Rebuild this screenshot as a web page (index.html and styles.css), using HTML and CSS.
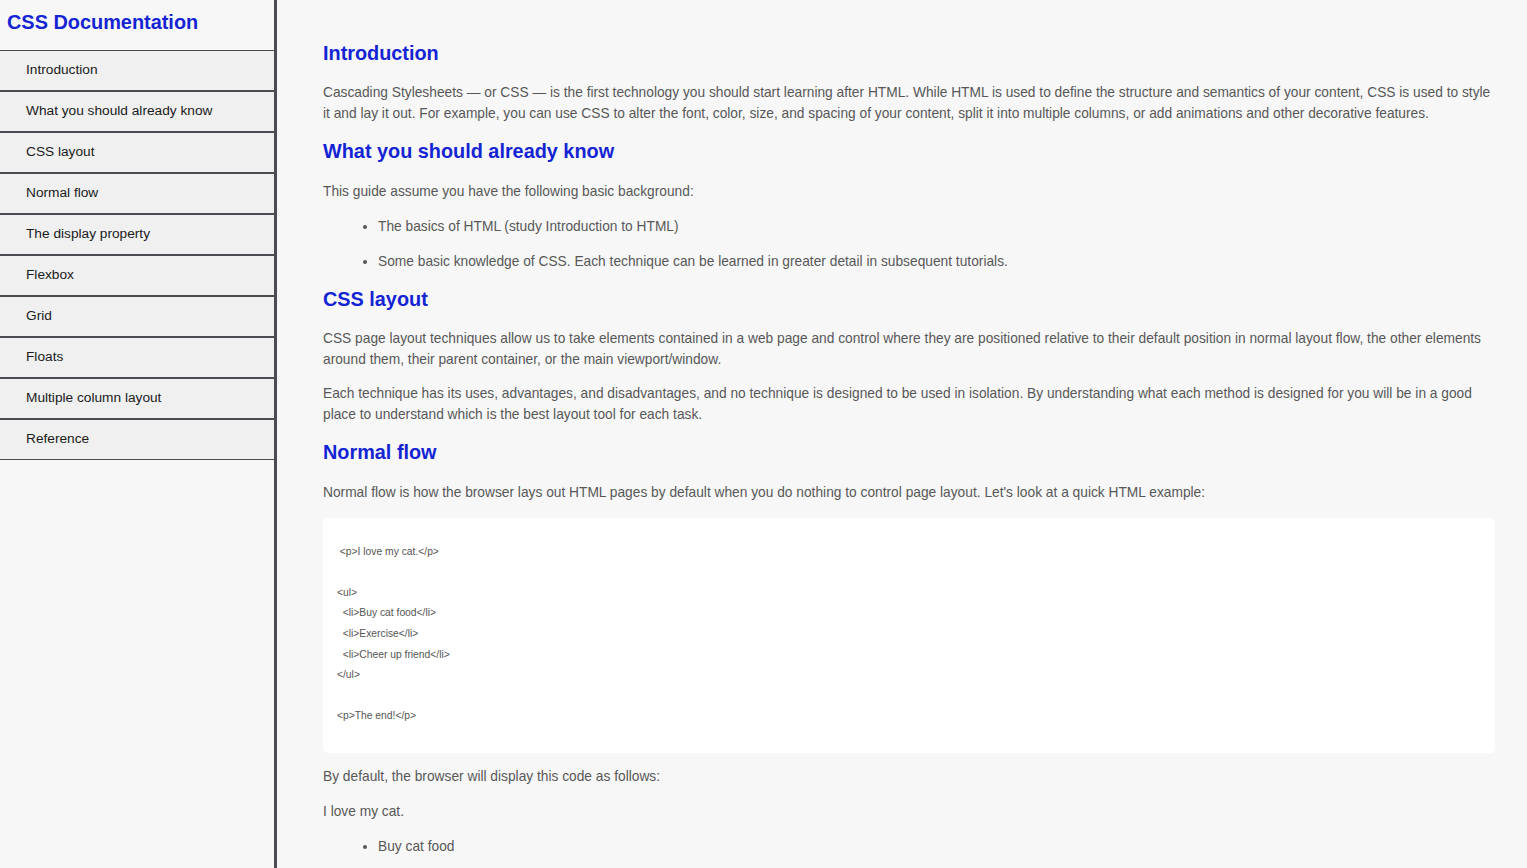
FILE: index.html
```html
<!DOCTYPE html>
<html lang="en">
<head>
<meta charset="utf-8">
<title>CSS Documentation</title>
<link rel="stylesheet" href="styles.css">
</head>
<body>
<nav class="navbar" id="navbar">
  <header class="nav-title">CSS Documentation</header>
  <ul class="nav-list">
    <li><a class="nav-link" href="#Introduction">Introduction</a></li>
    <li><a class="nav-link" href="#What_you_should_already_know">What you should already know</a></li>
    <li><a class="nav-link" href="#CSS_layout">CSS layout</a></li>
    <li><a class="nav-link" href="#Normal_flow">Normal flow</a></li>
    <li><a class="nav-link" href="#The_display_property">The display property</a></li>
    <li><a class="nav-link" href="#Flexbox">Flexbox</a></li>
    <li><a class="nav-link" href="#Grid">Grid</a></li>
    <li><a class="nav-link" href="#Floats">Floats</a></li>
    <li><a class="nav-link" href="#Multiple_column_layout">Multiple column layout</a></li>
    <li><a class="nav-link" href="#Reference">Reference</a></li>
  </ul>
</nav>
<main class="main-doc" id="main-doc">
  <section class="main-section" id="Introduction">
    <header class="section-title">Introduction</header>
    <p>Cascading Stylesheets — or CSS — is the first technology you should start learning after HTML. While HTML is used to define the structure and semantics of your content, CSS is used to style it and lay it out. For example, you can use CSS to alter the font, color, size, and spacing of your content, split it into multiple columns, or add animations and other decorative features.</p>
  </section>
  <section class="main-section" id="What_you_should_already_know">
    <header class="section-title">What you should already know</header>
    <p>This guide assume you have the following basic background:</p>
    <ul class="bullets">
      <li>The basics of HTML (study Introduction to HTML)</li>
      <li>Some basic knowledge of CSS. Each technique can be learned in greater detail in subsequent tutorials.</li>
    </ul>
  </section>
  <section class="main-section" id="CSS_layout">
    <header class="section-title">CSS layout</header>
    <p>CSS page layout techniques allow us to take elements contained in a web page and control where they are positioned relative to their default position in normal layout flow, the other elements around them, their parent container, or the main viewport/window.</p>
    <p>Each technique has its uses, advantages, and disadvantages, and no technique is designed to be used in isolation. By understanding what each method is designed for you will be in a good place to understand which is the best layout tool for each task.</p>
  </section>
  <section class="main-section" id="Normal_flow">
    <header class="section-title">Normal flow</header>
    <p>Normal flow is how the browser lays out HTML pages by default when you do nothing to control page layout. Let's look at a quick HTML example:</p>
    <pre class="code"><code> &lt;p&gt;I love my cat.&lt;/p&gt;

&lt;ul&gt;
  &lt;li&gt;Buy cat food&lt;/li&gt;
  &lt;li&gt;Exercise&lt;/li&gt;
  &lt;li&gt;Cheer up friend&lt;/li&gt;
&lt;/ul&gt;

&lt;p&gt;The end!&lt;/p&gt;</code></pre>
    <p>By default, the browser will display this code as follows:</p>
    <p>I love my cat.</p>
    <ul class="bullets">
      <li>Buy cat food</li>
      <li>Exercise</li>
      <li>Cheer up friend</li>
    </ul>
    <p>The end!</p>
  </section>
  <section class="main-section" id="The_display_property">
    <header class="section-title">The display property</header>
    <p>The main methods of achieving page layout in CSS are all values of the display property. This property allows us to change the default way something displays. Everything in normal flow has a value of display, used as the default way that elements they are set on behave.</p>
  </section>
  <section class="main-section" id="Flexbox">
    <header class="section-title">Flexbox</header>
    <p>Flexbox is the short name for the Flexible Box Layout Module, designed to make it easy for us to lay things out in one dimension — either as a row or as a column.</p>
  </section>
  <section class="main-section" id="Grid">
    <header class="section-title">Grid</header>
    <p>While flexbox is designed for one-dimensional layout, Grid Layout is designed for two dimensions — lining things up in rows and columns.</p>
  </section>
  <section class="main-section" id="Floats">
    <header class="section-title">Floats</header>
    <p>Floating an element changes the behavior of that element and the block level elements that follow it in normal flow.</p>
  </section>
  <section class="main-section" id="Multiple_column_layout">
    <header class="section-title">Multiple column layout</header>
    <p>The multiple column layout module gives us a way to lay out content in columns, similar to how text flows in a newspaper.</p>
  </section>
  <section class="main-section" id="Reference">
    <header class="section-title">Reference</header>
    <p>All the documentation in this page is taken from MDN.</p>
  </section>
</main>
</body>
</html>
```
FILE: styles.css
```css
* {
  box-sizing: border-box;
}

html, body {
  margin: 0;
  padding: 0;
}

body {
  background: #f7f7f7;
  font-family: "Liberation Sans", Arial, sans-serif;
  font-size: 13.75px;
  color: #575757;
  display: flex;
  align-items: flex-start;
}

.navbar {
  position: sticky;
  top: 0;
  flex: 0 0 277px;
  width: 277px;
  height: 100vh;
  border-right: 3px solid #4b4c52;
  background: #f7f7f7;
}

.nav-title {
  height: 50px;
  padding-left: 7px;
  display: flex;
  align-items: center;
  font-size: 19.9px;
  font-weight: bold;
  color: #1424d4;
  padding-bottom: 6px;
}

.nav-list {
  list-style: none;
  margin: 0;
  padding: 0;
}

.nav-link {
  display: block;
  height: 41px;
  line-height: 37px;
  padding-left: 26px;
  border-top: 1px solid #4b4c52;
  border-bottom: 1px solid #4b4c52;
  background: #f0f0f0;
  color: #1a1a1a;
  text-decoration: none;
  font-size: 13.7px;
}

.main-doc {
  flex: 1;
  min-width: 0;
  padding: 26px 32px 40px 46px;
}

.section-title {
  display: block;
  font-size: 19.85px;
  font-weight: bold;
  color: #1424d4;
  line-height: 23px;
  margin: 16px 0 17.3px;
}

p {
  margin: 13.5px 0;
  line-height: 21px;
}

.main-section > p:first-of-type {
  margin-top: 0;
}

.bullets {
  margin: 13.5px 0;
  padding-left: 55px;
}

.bullets li {
  line-height: 21px;
  margin: 14px 0;
}

.code {
  margin: 15px 0 13.5px;
  padding: 24px 14px 15px;
  background: #ffffff;
  border-radius: 5px;
  font-family: "Liberation Sans", Arial, sans-serif;
  font-size: 10.3px;
  line-height: 20.6px;
  color: #555555;
  white-space: pre;
  overflow: hidden;
}

.code code {
  font-family: inherit;
  display: block;
  min-height: 196px;
}
```
